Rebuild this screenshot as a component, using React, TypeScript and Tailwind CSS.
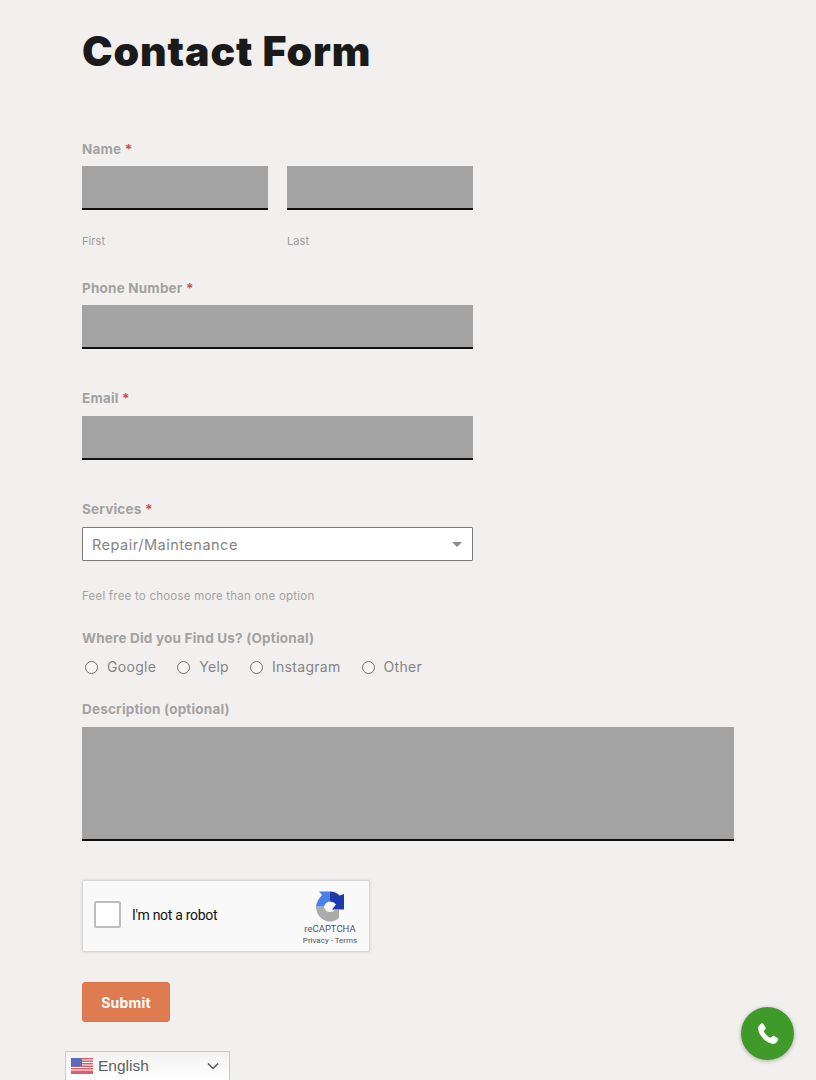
const font = { fontFamily: '"Inter", "Liberation Sans", sans-serif' };

function Label({ children, required }: { children: React.ReactNode; required?: boolean }) {
  return (
    <div className="h-[20px] text-[13.5px] leading-[20px] font-bold text-[#a3a2a2] tracking-[0.2px]">
      {children}
      {required && <span className="text-[#c9544c]"> *</span>}
    </div>
  );
}

function Field({ className = "" }: { className?: string }) {
  return <div className={`h-[44px] bg-[#a3a3a3] border-b-2 border-[#111111] ${className}`} />;
}

function Radio({ label }: { label: string }) {
  return (
    <div className="flex items-center gap-[9px]">
      <span className="w-[13px] h-[13px] rounded-full border-[1.5px] border-[#6f6f6f] bg-[#f6f5f4]" />
      <span className="text-[14px] leading-[20px] text-[#858484] tracking-[0.3px]">{label}</span>
    </div>
  );
}

function Recaptcha() {
  return (
    <div className="w-[288px] h-[72px] bg-[#f9f9f9] border border-[#d6d6d6] rounded-[2px] shadow-[0_0_3px_rgba(0,0,0,0.12)] flex items-center pl-[11px] pr-[12px]" style={{ fontFamily: '"Roboto", sans-serif' }}>
      <div className="w-[27px] h-[27px] mb-[3px] bg-white border-2 border-[#bdbdbd] rounded-[2px]" />
      <span className="ml-[11px] mb-[1px] text-[14px] text-[#111111] tracking-[-0.3px]">I'm not a robot</span>
      <div className="ml-auto pt-[5px] flex flex-col items-center w-[54px] whitespace-nowrap">
        <svg width="30" height="31" viewBox="0 0 30 31">
          <path d="M1 15.5 C1 23.500 7 30.500 15 30.500 C18.500 30.500 21.500 29 24 27 L24 19 L20 19 C19 20 17 21 15 21 C12 21 9.500 19 9 15.500 Z" fill="#ababab" />
          <path d="M15 0.500 H4 L7 4 C4 7 1.500 11 1 15.500 H9 C9.500 13.500 12 10.500 15 10.500 Z" fill="#4a80ec" />
          <path d="M15 0.500 C19 0.500 22 2 24.500 4.500 L29 3 V18.500 H17 L21 13.500 C19.500 11.500 17.500 10.500 15 10.500 Z" fill="#1c3aa9" />
        </svg>
        <span className="text-[9.5px] leading-[12px] text-[#555555] mt-[1px]">reCAPTCHA</span>
        <span className="text-[8px] leading-[12px] text-[#555555]">Privacy - Terms</span>
      </div>
    </div>
  );
}

export default function App() {
  return (
    <div className="relative h-[1080px] overflow-hidden bg-[#f2f0ef] pl-[82px] pr-[82px]" style={font}>
      <h1 className="pt-[26px] text-[41px] leading-[50px] font-black text-[#1a1a1a] tracking-[0.9px]">Contact Form</h1>

      <div className="mt-[63px] w-[391px]">
        <Label required>Name</Label>
        <div className="mt-[7px] grid grid-cols-2 gap-[19px]">
          <Field />
          <Field />
        </div>
        <div className="mt-[21px] grid grid-cols-2 gap-[19px] text-[11px] leading-[20px] text-[#9c9b9b] tracking-[0.1px]">
          <span>First</span>
          <span>Last</span>
        </div>

        <div className="mt-[27px]">
          <Label required>Phone Number</Label>
          <Field className="mt-[7px]" />
        </div>

        <div className="mt-[39px]">
          <Label required>Email</Label>
          <Field className="mt-[8px]" />
        </div>

        <div className="mt-[39px]">
          <Label required>Services</Label>
          <div className="mt-[8px] h-[34px] bg-white border border-[#7a7a7a] rounded-[1px] flex items-center pl-[9px] pr-[10px] pt-[1px] text-[14.5px] text-[#858484] tracking-[0.5px]">
            <span>Repair/Maintenance</span>
            <span className="ml-auto w-0 h-0 border-l-[5px] border-r-[5px] border-t-[5px] border-l-transparent border-r-transparent border-t-[#8c8c8c]" />
          </div>
        </div>

        <div className="mt-[25px] text-[11.5px] leading-[20px] text-[#a3a2a2] tracking-[0.22px]">Feel free to choose more than one option</div>

        <div className="mt-[22px]">
          <Label>Where Did you Find Us? (Optional)</Label>
          <div className="mt-[9px] pl-[3px] flex items-center gap-[21px]">
            <Radio label="Google" />
            <Radio label="Yelp" />
            <Radio label="Instagram" />
            <Radio label="Other" />
          </div>
        </div>
      </div>

      <div className="mt-[22px]">
        <Label>Description (optional)</Label>
        <div className="mt-[8px] h-[114px] bg-[#a3a3a3] border-b-2 border-[#111111]" />
      </div>

      <div className="mt-[39px]">
        <Recaptcha />
      </div>

      <button className="mt-[30px] block w-[88px] h-[40px] bg-[#df7b51] border border-[#d9744a] rounded-[3px] text-white text-[14px] font-bold tracking-[0.2px]">Submit</button>

      <div className="fixed right-[22px] bottom-[20px] w-[53px] h-[53px] rounded-full bg-[#3f9a2a] shadow-[0_1px_4px_rgba(0,0,0,0.3)] flex items-center justify-center">
        <svg width="28" height="28" viewBox="0 0 24 24" fill="#ffffff">
          <path d="M6.300 3c.6-.4 1.200-.3 1.600.3l1.900 2.900c.4.6.3 1.200-.2 1.700L8.700 8.900c-.3.3-.3.7-.1 1.100 1 1.900 3.100 4 5 5 .4.2.8.2 1.100-.1l1-.9c.5-.5 1.100-.6 1.700-.2l2.900 1.900c.6.400.7 1 .3 1.600-.9 1.400-2.200 3.200-4.200 3.200C10.700 20 4 13.300 3.500 7.500c-.2-2 1.500-3.600 2.800-4.500z" />
        </svg>
      </div>

      <div className="fixed left-[65px] bottom-0 w-[165px] h-[29px] bg-gradient-to-b from-[#f2f2f2] to-white border border-b-0 border-[#c9c9c9] flex items-center pl-[5px] pr-[10px]" style={{ fontFamily: '"Liberation Sans", sans-serif' }}>
        <svg width="22" height="16" viewBox="0 0 22 16">
          <rect width="22" height="16" fill="#ffffff" />
          {[0, 2.5, 5, 7.5, 10, 12.5].map((y) => (
            <rect key={y} y={y} width="22" height="1.5" fill="#d9606a" />
          ))}
          <rect y="14" width="22" height="2" fill="#d9606a" />
          <rect width="11" height="8.500" fill="#5c6bb5" />
        </svg>
        <span className="ml-[5px] text-[15.5px] text-[#5f5f5f]">English</span>
        <svg className="ml-auto" width="12" height="8" viewBox="0 0 12 8" fill="none" stroke="#555555" strokeWidth="1.500">
          <path d="M1 1.500 L6 6.500 L11 1.500" />
        </svg>
      </div>
    </div>
  );
}
